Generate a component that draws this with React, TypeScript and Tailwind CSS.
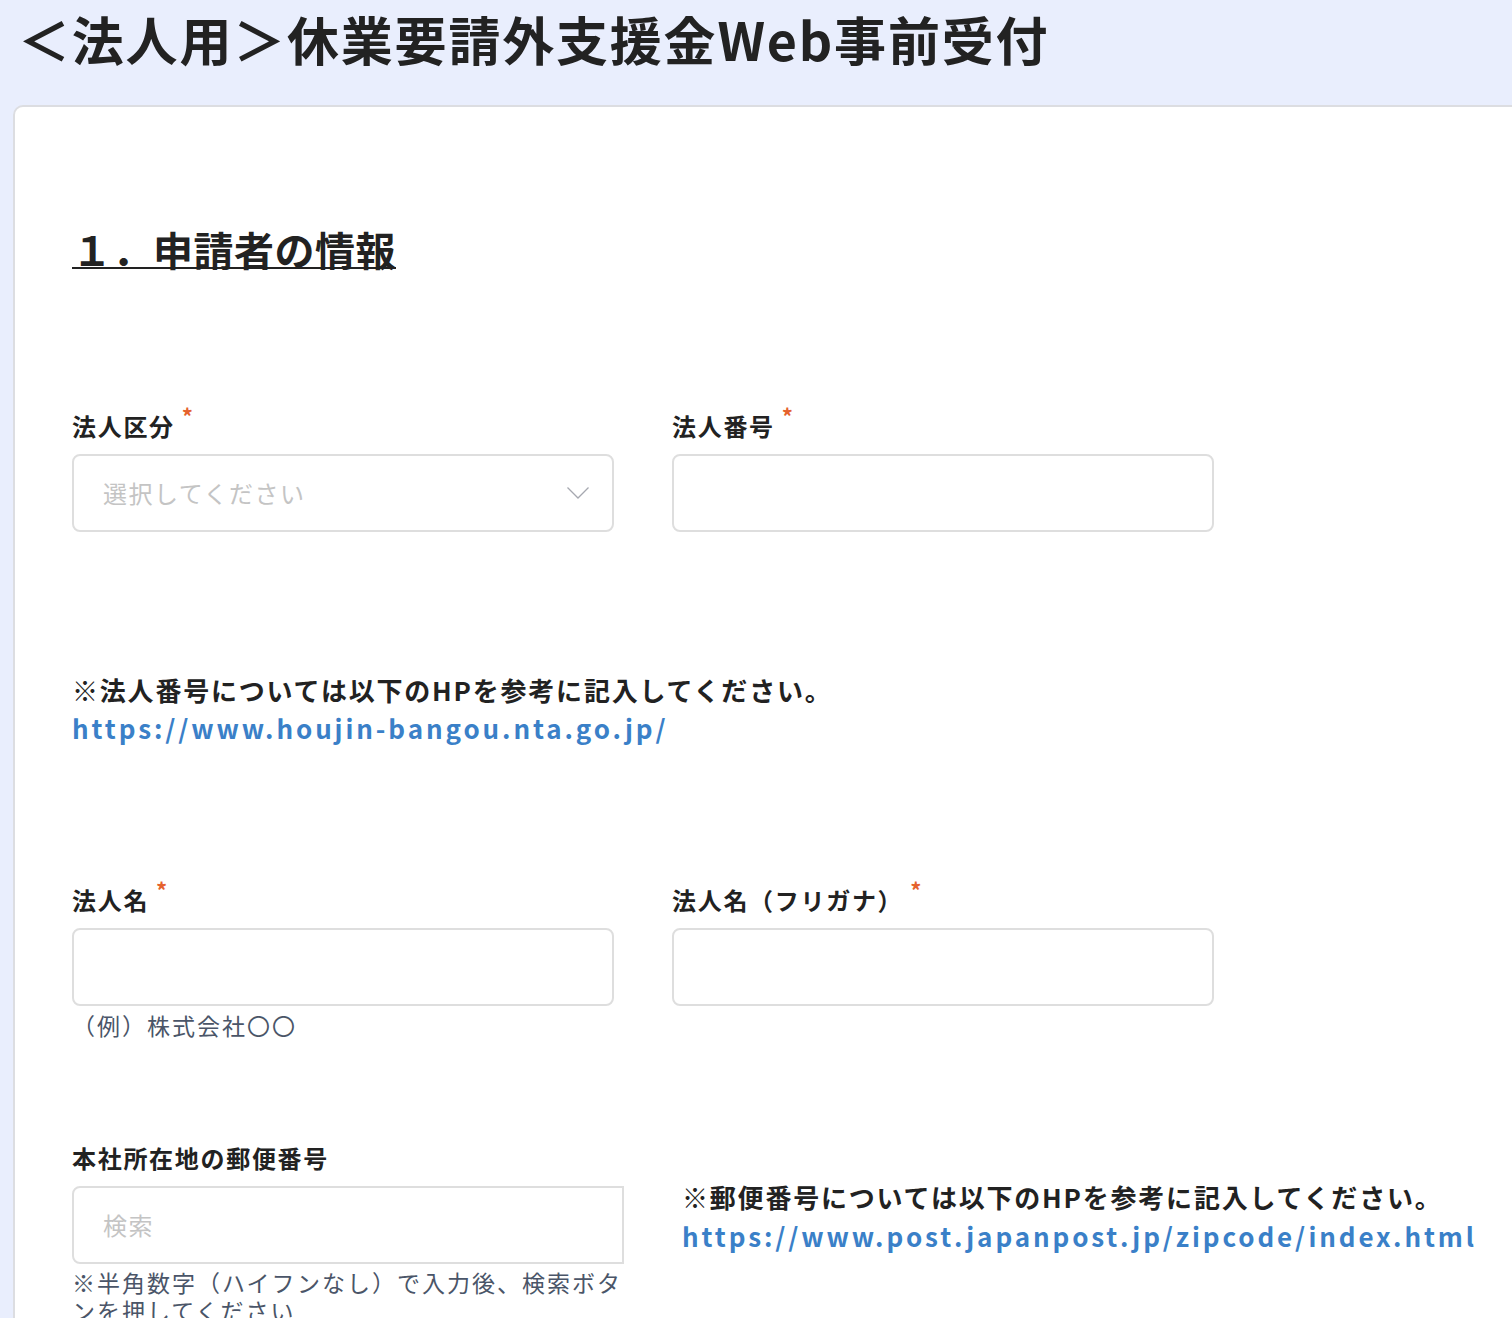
import React from "react";

const font = { fontFamily: '"Noto Sans CJK JP", "Noto Sans", sans-serif' };

function Req() {
  return <sup className="ml-[7px] text-[22px] font-bold text-[#e5622d]">*</sup>;
}

function Label({ children, req }: { children: React.ReactNode; req?: boolean }) {
  return (
    <div className="h-[32px] text-[24px] font-bold leading-[32px] tracking-[1.7px] text-[#222]">
      {children}
      {req && <Req />}
    </div>
  );
}

function TextBox() {
  return <div className="mt-[12px] h-[78px] w-full rounded-[8px] border-2 border-[#dedede] bg-white" />;
}

export default function App() {
  return (
    <div className="h-[1318px] w-full overflow-hidden bg-[#e9eefd]" style={font}>
      <h1 className="pl-[18px] pt-[13px] text-[52px] font-bold leading-[52px] tracking-[1.8px] text-[#222]">
        ＜法人用＞休業要請外支援金Web事前受付
      </h1>
      <div className="ml-[13px] mt-[40px] w-[1560px] rounded-tl-[10px] border-2 border-[#dcdde1] bg-white pl-[57px] pt-[118px] pb-[200px]">
        <h2 className="text-[40px] font-bold leading-[48px] tracking-[0.5px] text-[#222] underline decoration-2 underline-offset-[1px]">
          １．申請者の情報
        </h2>

        <div className="mt-[137px] flex gap-[58px]">
          <div className="w-[542px]">
            <Label req>法人区分</Label>
            <div className="mt-[12px] flex h-[78px] w-full items-center justify-between rounded-[8px] border-2 border-[#dedede] bg-white pl-[29px] pr-[22px]">
              <span className="text-[24px] leading-[32px] tracking-[1.5px] text-[#c4c4c4]">選択してください</span>
              <svg width="24" height="14" viewBox="0 0 24 14" fill="none">
                <polyline points="1.5,1.5 12,12 22.5,1.5" stroke="#a6a8b0" strokeWidth="1.3" />
              </svg>
            </div>
          </div>
          <div className="w-[542px]">
            <Label req>法人番号</Label>
            <TextBox />
          </div>
        </div>

        <div className="mt-[139px] text-[26px] font-bold leading-[38px]">
          <div className="tracking-[1.8px] text-[#222]">※法人番号については以下のHPを参考に記入してください。</div>
          <div className="tracking-[2.9px] text-[#3a80c8]">https://www.houjin-bangou.nta.go.jp/</div>
        </div>

        <div className="mt-[137px] flex gap-[58px]">
          <div className="w-[542px]">
            <Label req>法人名</Label>
            <TextBox />
            <div className="mt-[3px] text-[23px] leading-[32px] tracking-[2px] text-[#4a5568]">（例）株式会社〇〇</div>
          </div>
          <div className="w-[542px]">
            <Label req>法人名（フリガナ）</Label>
            <TextBox />
          </div>
        </div>

        <div className="mt-[101px] flex gap-[58px]">
          <div className="w-[552px]">
            <Label>本社所在地の郵便番号</Label>
            <div className="mt-[12px] flex h-[78px] w-full items-center rounded-l-[8px] border-2 border-[#dedede] bg-white pl-[29px]">
              <span className="text-[24px] leading-[32px] tracking-[1.5px] text-[#c4c4c4]">検索</span>
            </div>
            <div className="mt-[4px] text-[23px] leading-[28px] tracking-[2px] text-[#4a5568]">
              ※半角数字（ハイフンなし）で入力後、検索ボタンを押してください
            </div>
          </div>
          <div className="pt-[35px] text-[26px] font-bold leading-[39px]">
            <div className="tracking-[1.8px] text-[#222]">※郵便番号については以下のHPを参考に記入してください。</div>
            <div className="tracking-[2.9px] text-[#3a80c8]">https://www.post.japanpost.jp/zipcode/index.html</div>
          </div>
        </div>
      </div>
    </div>
  );
}
